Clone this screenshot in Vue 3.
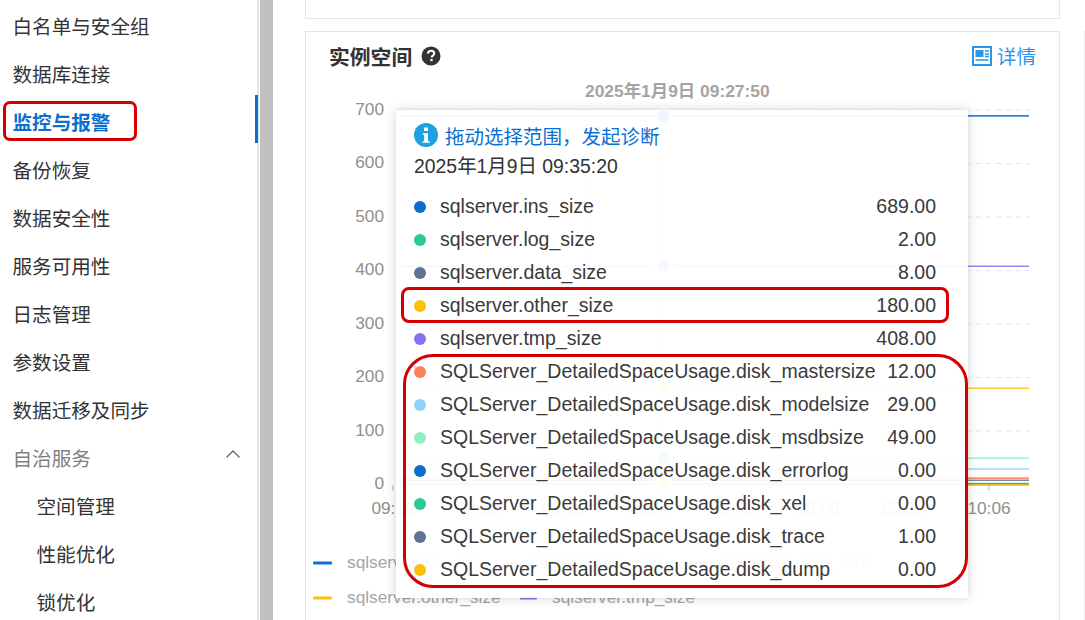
<script setup>
const menu = [
  { label: '白名单与安全组' },
  { label: '数据库连接' },
  { label: '监控与报警', active: true },
  { label: '备份恢复' },
  { label: '数据安全性' },
  { label: '服务可用性' },
  { label: '日志管理' },
  { label: '参数设置' },
  { label: '数据迁移及同步' },
  { label: '自治服务', group: true },
  { label: '空间管理', sub: true },
  { label: '性能优化', sub: true },
  { label: '锁优化', sub: true }
]

const blue = '#0a6fd0'
const green = '#2cc996'
const slate = '#5f7396'
const amber = '#fdc009'
const purple = '#8a70f5'

const rows = [
  { name: 'sqlserver.ins_size', value: '689.00', color: blue },
  { name: 'sqlserver.log_size', value: '2.00', color: green },
  { name: 'sqlserver.data_size', value: '8.00', color: slate },
  { name: 'sqlserver.other_size', value: '180.00', color: amber },
  { name: 'sqlserver.tmp_size', value: '408.00', color: purple },
  { name: 'SQLServer_DetailedSpaceUsage.disk_mastersize', value: '12.00', color: '#fb8060' },
  { name: 'SQLServer_DetailedSpaceUsage.disk_modelsize', value: '29.00', color: '#8cd3fb' },
  { name: 'SQLServer_DetailedSpaceUsage.disk_msdbsize', value: '49.00', color: '#8ff0c4' },
  { name: 'SQLServer_DetailedSpaceUsage.disk_errorlog', value: '0.00', color: blue },
  { name: 'SQLServer_DetailedSpaceUsage.disk_xel', value: '0.00', color: green },
  { name: 'SQLServer_DetailedSpaceUsage.disk_trace', value: '1.00', color: slate },
  { name: 'SQLServer_DetailedSpaceUsage.disk_dump', value: '0.00', color: amber }
]

const yOf = (v) => 484.5 - v * 0.535
const series = rows.map((r) => ({ ...r, y: yOf(parseFloat(r.value)) }))

const yTicks = [700, 600, 500, 400, 300, 200, 100, 0].map((v) => ({ v, y: yOf(v) }))
const xTicks = [
  ['09:10', 393], ['09:18', 478], ['09:26', 563], ['09:34', 648],
  ['09:42', 733], ['09:50', 818], ['09:58', 903], ['10:06', 989]
].map(([t, x]) => ({ t, x }))

const legend = [
  { text: 'sqlserver.ins_size', x: 347, y: 563, lx: 313, lw: 19, color: blue },
  { text: 'sqlserver.log_size', x: 530, y: 563, lx: 503, lw: 15, color: green },
  { text: 'sqlserver.data_size', x: 722, y: 563, lx: 690, lw: 17, color: slate },
  { text: 'sqlserver.other_size', x: 347, y: 598, lx: 313, lw: 19, color: amber },
  { text: 'sqlserver.tmp_size', x: 552, y: 598, lx: 520, lw: 17, color: purple }
]
const markers = [
  { y: 115.9, color: '#0a6fd0' },
  { y: 266, color: '#8a70f5' },
  { y: 388, color: '#fdc009' },
  { y: 458, color: '#2cc996' },
  { y: 484.5, color: '#fdc009' }
]
</script>

<template>
  <div class="app">
    <nav class="sidebar">
      <div
        v-for="m in menu"
        :key="m.label"
        class="item"
        :class="{ active: m.active, group: m.group, sub: m.sub }"
      >
        <span>{{ m.label }}</span>
        <span v-if="m.active" class="mark"></span>
        <svg v-if="m.group" class="chev" width="16" height="10" viewBox="0 0 16 10">
          <path d="M1.5 8.5 8 2l6.5 6.5" fill="none" stroke="#666" stroke-width="1.3" />
        </svg>
      </div>
    </nav>
    <div class="track"></div>
    <main class="main">
      <section class="card stub"></section>
      <section class="card panel">
        <header class="head">
          <h3 class="title">实例空间</h3>
          <svg class="help" width="20" height="20" viewBox="0 0 20 20">
            <circle cx="10" cy="10" r="9.5" fill="#333" />
            <path d="M6.9 7.6c.2-1.9 1.5-2.8 3.2-2.8 1.8 0 3.1 1 3.1 2.6 0 2.2-2.6 2.2-2.6 4.2" fill="none" stroke="#fff" stroke-width="2" />
            <rect x="9.4" y="13" width="2.2" height="2.2" fill="#fff" />
          </svg>
          <a class="detail">
            <svg width="20" height="20" viewBox="0 0 20 20">
              <rect x="1" y="1" width="18" height="18" fill="none" stroke="#2b95e8" stroke-width="2" />
              <rect x="3.5" y="4" width="8" height="7" fill="#2b95e8" />
              <path d="M13 5h4M13 8h4M13 10.5h4M3.5 14h13" stroke="#2b95e8" stroke-width="1.5" fill="none" />
            </svg>
            <span>详情</span>
          </a>
        </header>
        <div class="chart">
          <svg class="plot" width="753" height="539" viewBox="306 81 753 539">
            <text x="585" y="97" class="stamp">2025年1月9日 09:27:50</text>
            <g v-for="t in yTicks" :key="t.v">
              <text x="384" :y="t.y + 4.5" text-anchor="end" class="axis">{{ t.v }}</text>
              <line v-if="t.v" x1="396" :y1="t.y" x2="1029" :y2="t.y" stroke="#e3e3e3" stroke-width="1" stroke-dasharray="5 5" />
            </g>
            <line x1="396" y1="484.5" x2="1029" y2="484.5" stroke="#cfcfcf" />
            <g v-for="t in xTicks" :key="t.t">
              <line :x1="t.x" y1="485" :x2="t.x" y2="491" stroke="#bbb" />
              <text :x="t.x" y="514" text-anchor="middle" class="axis">{{ t.t }}</text>
            </g>
            <line x1="585" y1="110" x2="585" y2="484" stroke="#bbb" stroke-dasharray="4 4" />
            <line x1="663.5" y1="110" x2="663.5" y2="484" stroke="#ddd" />
            <line
              v-for="s in series"
              :key="s.name"
              x1="400"
              :y1="s.y"
              x2="1029"
              :y2="s.y"
              :stroke="s.color"
              stroke-opacity="0.85"
              stroke-width="1.6"
            />
            <g v-for="m in markers" :key="m.y">
              <circle cx="663.5" :cy="m.y" r="9" fill="#fff" />
              <circle cx="663.5" :cy="m.y" r="6" :fill="m.color" />
            </g>
            <g v-for="l in legend" :key="l.text">
              <rect :x="l.lx" :y="l.y - 1.5" :width="l.lw" height="3" rx="1" :fill="l.color" />
              <text :x="l.x" :y="l.y + 5" class="legend">{{ l.text }}</text>
            </g>
          </svg>
          <div class="tip">
            <div class="tip-head">
              <svg width="24" height="24" viewBox="0 0 24 24">
                <circle cx="12" cy="12" r="12" fill="#1e9fe0" />
                <rect x="10" y="4.5" width="4" height="3.6" fill="#fff" />
                <path d="M8.8 10.2H14v8h1.8v1.6H8.6v-1.6h1.6v-6.4H8.8z" fill="#fff" />
              </svg>
              <span>拖动选择范围，发起诊断</span>
            </div>
            <div class="tip-date">2025年1月9日 09:35:20</div>
            <ul class="tip-rows">
              <li v-for="r in rows" :key="r.name" class="row">
                <i class="dot" :style="{ background: r.color }"></i>
                <span class="name">{{ r.name }}</span>
                <span class="val">{{ r.value }}</span>
              </li>
            </ul>
            <div class="note note-one"></div>
            <div class="note note-many"></div>
          </div>
        </div>
      </section>
    </main>
    <div class="edge"></div>
  </div>
</template>

<style>
html, body { margin: 0; background: #fff; }
</style>

<style scoped>
.app {
  display: flex;
  height: 620px;
  overflow: hidden;
  position: relative;
  background: #fff;
  font-family: "Liberation Sans", "Noto Sans CJK SC", sans-serif;
  color: #333;
}
.sidebar {
  box-sizing: border-box;
  width: 259px;
  flex: none;
  padding-top: 1px;
  border-right: 2px solid #e4e4e4;
}
.item {
  position: relative;
  display: flex;
  align-items: center;
  height: 48px;
  padding-left: 12.5px;
  font-size: 19.6px;
  color: #333;
}
.item.group { color: #808080; }
.item.sub { padding-left: 36.5px; }
.item.active { color: #0a6fd0; font-weight: 700; }
.item.active::before {
  content: "";
  position: absolute;
  left: 3px;
  top: 4px;
  width: 134px;
  height: 40px;
  box-sizing: border-box;
  border: 3px solid #d40000;
  border-radius: 7px;
}
.mark {
  position: absolute;
  right: -1px;
  top: -2px;
  width: 3px;
  height: 48px;
  background: #0a6fd0;
}
.chev {
  position: absolute;
  left: 225px;
  top: 16px;
}
.track {
  width: 13px;
  flex: none;
  margin-left: 1px;
  background: #c1c1c1;
}
.main {
  flex: 1;
  min-width: 0;
  padding: 0 25px 0 32px;
}
.card {
  border: 1px solid #e5e5e5;
  box-sizing: border-box;
}
.stub {
  height: 19px;
  border-top: none;
  margin-bottom: 12px;
}
.panel { height: 640px; }
.head {
  box-sizing: border-box;
  display: flex;
  align-items: center;
  height: 49px;
  padding: 0 23px 2px 23px;
}
.title {
  margin: 0 9px 0 0;
  font-size: 20.8px;
  font-weight: 700;
  color: #333;
}
.help { margin-top: 1px; }
.detail {
  margin-left: auto;
  display: flex;
  align-items: center;
  gap: 5px;
  font-size: 19.6px;
  color: #2b95e8;
}
.chart { position: relative; }
.plot { display: block; }
.stamp {
  font-size: 17.4px;
  font-weight: 700;
  fill: #a4a4a4;
}
.axis { font-size: 17.3px; fill: #8f8f8f; }
.legend { font-size: 17.3px; fill: #a6a6a6; }
.tip {
  position: absolute;
  left: 90px;
  top: 29px;
  box-sizing: border-box;
  width: 572px;
  height: 488px;
  padding: 10px 32px 0 18px;
  background: rgba(255, 255, 255, 0.94);
  box-shadow: 0 0 10px rgba(0, 0, 0, 0.18);
}
.tip-head {
  display: flex;
  align-items: center;
  gap: 7px;
  height: 30px;
  font-size: 19.5px;
  color: #0a6fd0;
}
.tip-date {
  height: 30px;
  margin-top: 1px;
  line-height: 30px;
  font-size: 19.4px;
  color: #333;
}
.tip-rows {
  list-style: none;
  margin: 9px 0 0;
  padding: 0;
}
.row {
  display: flex;
  align-items: center;
  height: 33px;
  font-size: 19.5px;
  color: #3a3a3a;
}
.dot {
  width: 12px;
  height: 12px;
  border-radius: 50%;
  margin-right: 14px;
  flex: none;
}
.val { margin-left: auto; }
.note {
  position: absolute;
  box-sizing: border-box;
  border: 3px solid #d40000;
}
.note-one {
  left: 5px;
  top: 177px;
  width: 548px;
  height: 36px;
  border-radius: 8px;
}
.note-many {
  left: 7px;
  top: 244px;
  width: 565px;
  height: 234px;
  border-radius: 30px;
}
.edge {
  position: absolute;
  right: 0;
  top: 31px;
  bottom: 0;
  width: 1px;
  background: #efefef;
}
</style>
